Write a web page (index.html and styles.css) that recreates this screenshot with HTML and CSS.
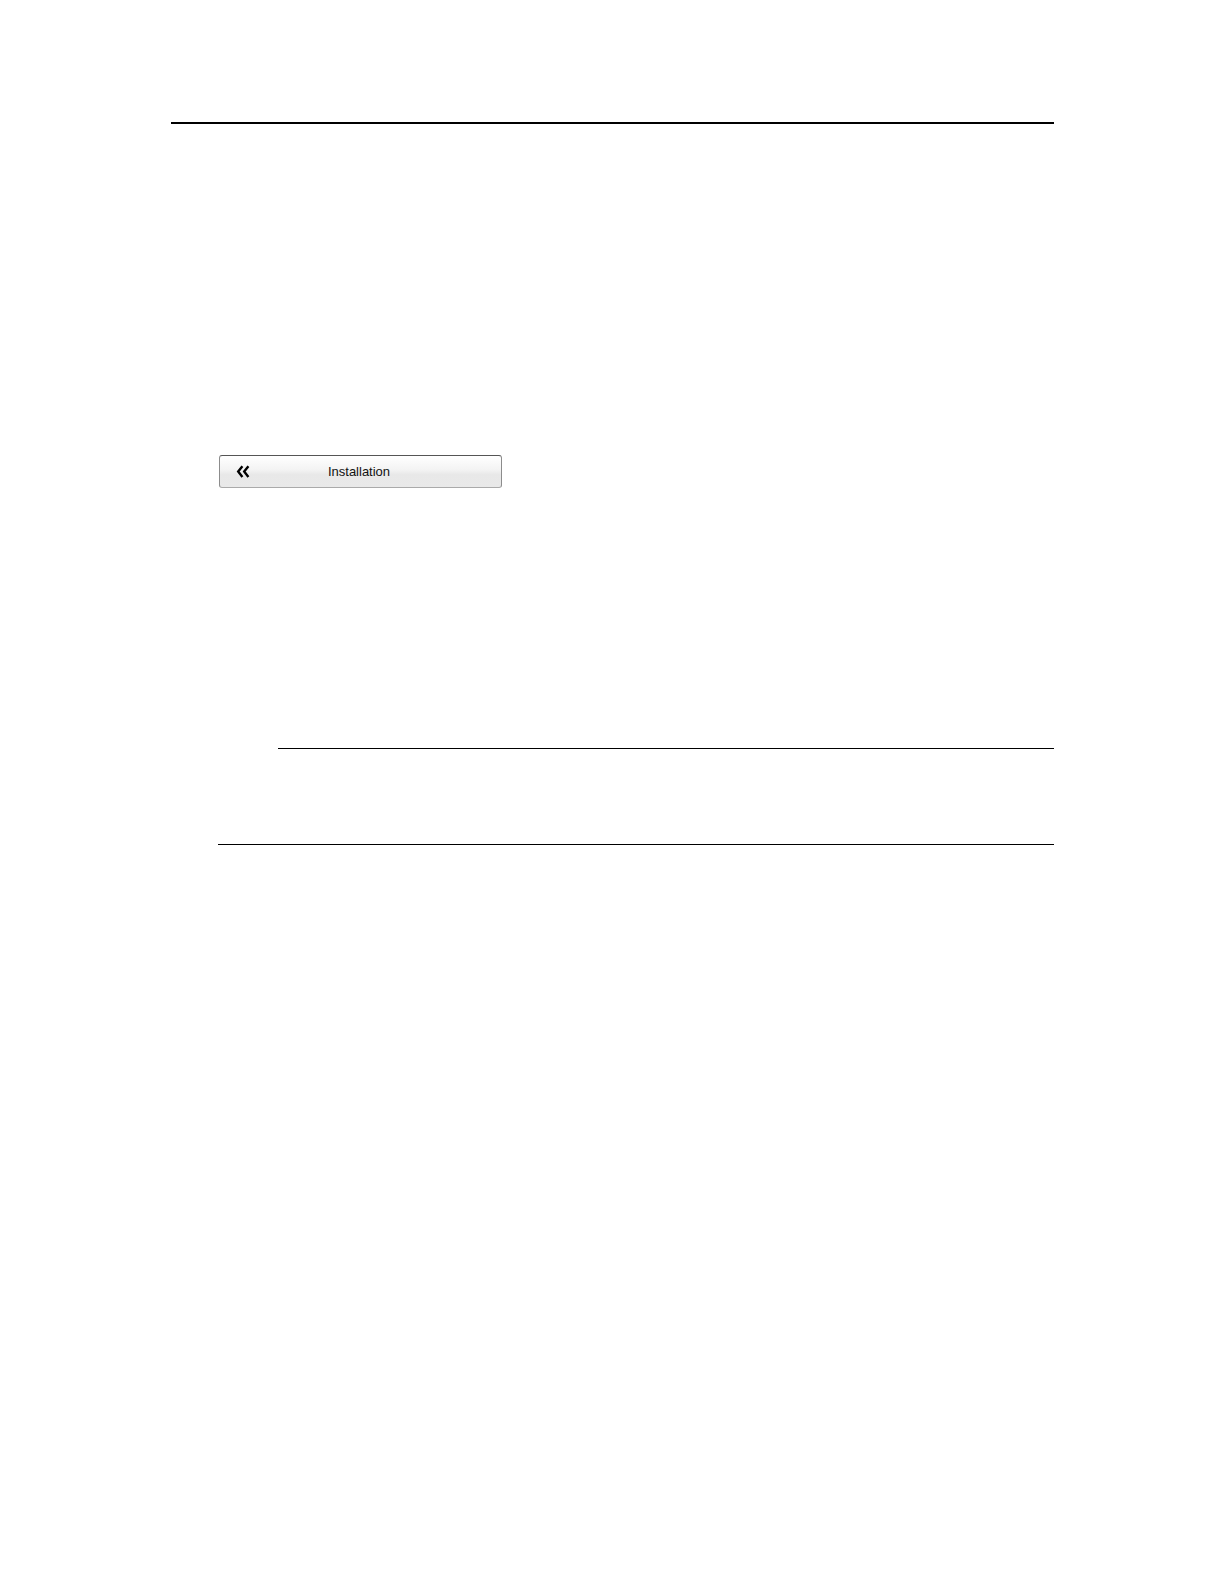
FILE: index.html
```html
<!DOCTYPE html>
<html lang="en">
<head>
<meta charset="utf-8">
<meta name="viewport" content="width=device-width, initial-scale=1">
<title>Installation</title>
<link rel="stylesheet" href="styles.css">
</head>
<body>
<main class="page">
  <hr class="rule rule-heavy">
  <section class="content">
    <button class="menu-button" type="button">
      <svg class="chevrons" viewBox="0 0 14 14" aria-hidden="true">
        <path d="M6.4 1.2 2.2 6.6 6.4 12M12.4 1.2 8.2 6.6l4.2 5.4"/>
      </svg>
      <span class="label">Installation</span>
    </button>
    <hr class="rule rule-inset">
    <hr class="rule rule-end">
  </section>
</main>
</body>
</html>
```
FILE: styles.css
```css
body {
  margin: 0;
  background: #fff;
  color: #111;
  font-family: "Liberation Sans", Arial, sans-serif;
}

.page {
  padding: 122px 170px 120px 171px;
}

.rule {
  height: 1px;
  margin: 0;
  border: 0;
  background: #000;
}

.rule-heavy {
  height: 2px;
}

.content {
  padding: 331px 0 0 47px;
}

.menu-button {
  display: grid;
  grid-template-columns: 16px 1fr 16px;
  align-items: center;
  width: 283px;
  height: 33px;
  margin: 0 0 0 1px;
  padding: 0 19px 0 16px;
  border: 1px solid #8c8c8c;
  border-top-color: #555;
  border-bottom-color: #aaa;
  border-radius: 3px;
  background: linear-gradient(#fff, #f3f3f3 45%, #e8e8e8 60%, #e9e9e9);
  color: inherit;
  font-family: inherit;
  font-size: 13px;
  line-height: 16px;
}

.chevrons {
  width: 14px;
  height: 14px;
  fill: none;
  stroke: #000;
  stroke-width: 2.4;
}

.label {
  text-align: center;
}

.rule-inset {
  margin: 260px 0 95px 60px;
}
```
